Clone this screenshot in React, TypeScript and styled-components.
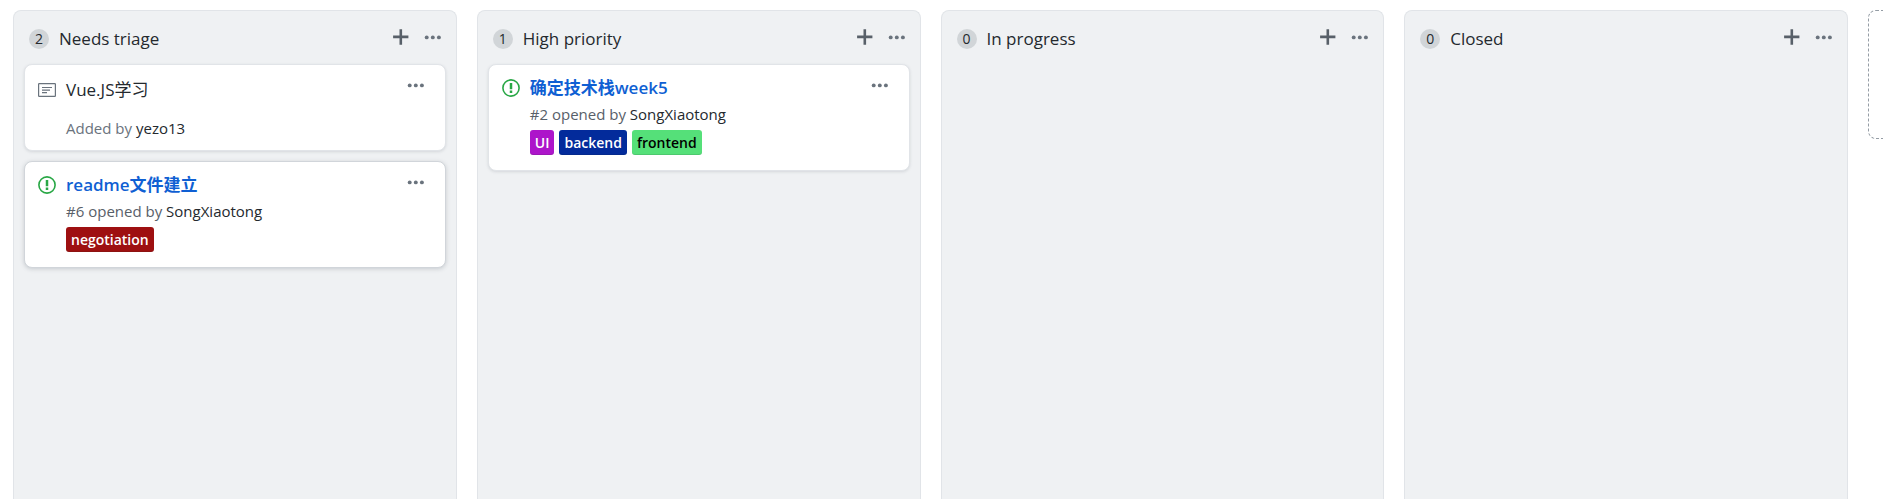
import React from "react";
import styled, { createGlobalStyle } from "styled-components";

const GlobalStyle = createGlobalStyle`
  * { box-sizing: border-box; }
  html, body, #root { height: 100%; }
  body {
    margin: 0;
    background: #fff;
    color: #24292e;
    font-family: "Segoe UI", "Open Sans", "Noto Sans CJK SC", sans-serif;
    font-size: 14px;
    line-height: 22px;
  }
  a { color: inherit; text-decoration: none; }
  a:hover { text-decoration: underline; }
`;

const Board = styled.main`
  display: grid;
  grid-template-columns: repeat(4, minmax(360px, 1fr)) 15px;
  gap: 20px;
  min-height: 100%;
  padding: 10px 0 0 13px;
`;

const ColumnBox = styled.section`
  padding: 0 10px;
  background: #eff1f3;
  border: 1px solid #e1e4e8;
  border-bottom: 0;
  border-radius: 8px 8px 0 0;
`;

const ColumnHeader = styled.header`
  display: flex;
  align-items: flex-start;
  padding: 15px 4px 12px 5px;
`;

const Count = styled.span`
  min-width: 20px;
  height: 20px;
  margin: 3px 10px 0 0;
  border-radius: 10px;
  background: #d1d5d8;
  font-size: 14px;
  line-height: 20px;
  text-align: center;
`;

const ColumnName = styled.h2`
  flex: 1;
  margin: 0;
  font-size: 17px;
  font-weight: 500;
  line-height: 26px;
`;

const IconButton = styled.button`
  display: flex;
  align-items: center;
  height: 16px;
  padding: 0;
  border: 0;
  background: none;
  color: #6a737d;
  cursor: pointer;
`;

const Actions = styled.div`
  display: flex;
  align-items: center;
  gap: 15px;
  height: 22px;
`;

const CardList = styled.div`
  display: flex;
  flex-direction: column;
  gap: 10px;
`;

const CardBox = styled.article<{ $raised?: boolean; $note?: boolean }>`
  display: flex;
  align-items: flex-start;
  padding: 12px 20px ${(p) => (p.$note ? "11px" : "15px")} 13px;
  background: #fff;
  border: 1px solid ${(p) => (p.$raised ? "#d1d5da" : "#e1e4e8")};
  border-radius: 8px;
  box-shadow: ${(p) =>
    p.$raised ? "0 1px 4px rgba(106, 115, 125, 0.3)" : "0 1px 3px rgba(106, 115, 125, 0.2)"};
`;

const CardIcon = styled.span<{ $open?: boolean }>`
  display: flex;
  align-items: center;
  height: ${(p) => (p.$open ? "22px" : "26px")};
  margin-right: 10px;
  color: ${(p) => (p.$open ? "#28a745" : "#6a737d")};
`;

const CardBody = styled.div`
  flex: 1;
  min-width: 0;
`;

const NoteText = styled.p`
  margin: 0 0 14px;
  font-size: 17px;
  line-height: 26px;
`;

const IssueTitle = styled.a`
  display: block;
  color: #0f5fd3;
  font-size: 17px;
  font-weight: 600;
  line-height: 22px;
`;

const Meta = styled.div<{ $note?: boolean }>`
  margin: ${(p) => (p.$note ? "0" : "4px 0 5px")};
  color: ${(p) => (p.$note ? "#6a737d" : "#586069")};
  font-size: 15px;
  line-height: 22px;

  a { color: #24292e; }
`;

const Labels = styled.div`
  display: flex;
  gap: 5px;
`;

const Label = styled.a<{ $bg: string; $fg: string }>`
  padding: 0 5px;
  border-radius: 3px;
  background: ${(p) => p.$bg};
  box-shadow: inset 0 -1px 0 rgba(27, 31, 35, 0.12);
  color: ${(p) => p.$fg};
  font-size: 14px;
  font-weight: 600;
  line-height: 25px;
`;

const AddColumn = styled.button`
  width: 100%;
  height: 129px;
  border: 1px dashed #959da5;
  border-right: 0;
  border-radius: 8px 0 0 8px;
  background: #fff;
`;

const PlusIcon = () => (
  <svg width="16" height="16" viewBox="0 0 16 16" aria-hidden="true">
    <path d="M6.5 0.3h2.6v6.3h6.3v2.6H9.1v6.5H6.5V9.2H0.1V6.6h6.4z" fill="#586069" />
  </svg>
);

const DotsIcon = () => (
  <svg width="18" height="6" viewBox="0 0 18 6" fill="currentColor" aria-hidden="true">
    <circle cx="2.7" cy="3.4" r="1.95" />
    <circle cx="8.8" cy="3.4" r="1.95" />
    <circle cx="14.9" cy="3.4" r="1.95" />
  </svg>
);

const NoteIcon = () => (
  <svg width="18" height="14" viewBox="0 0 18 14" fill="none" stroke="currentColor" aria-hidden="true">
    <rect x="0.6" y="0.6" width="16.8" height="12.8" rx="0.6" strokeWidth="1.2" />
    <path d="M4 4.5h10M4 7.1h8M4 9.7h5" strokeWidth="1.2" />
  </svg>
);

const OpenIcon = () => (
  <svg width="18" height="18" viewBox="0 0 18 18" fill="none" stroke="currentColor" aria-hidden="true">
    <circle cx="9" cy="9" r="8.1" strokeWidth="1.6" />
    <path d="M9 4v6.2M9 11.6V14" strokeWidth="2.5" />
  </svg>
);

type LabelData = { text: string; bg: string; fg: string };
type CardData =
  | { kind: "note"; text: string; author: string }
  | { kind: "issue"; title: string; num: number; author: string; labels: LabelData[]; raised?: boolean };

const columns: { name: string; cards: CardData[] }[] = [
  {
    name: "Needs triage",
    cards: [
      { kind: "note", text: "Vue.JS学习", author: "yezo13" },
      {
        kind: "issue",
        title: "readme文件建立",
        num: 6,
        author: "SongXiaotong",
        raised: true,
        labels: [{ text: "negotiation", bg: "#9e1011", fg: "#fff" }],
      },
    ],
  },
  {
    name: "High priority",
    cards: [
      {
        kind: "issue",
        title: "确定技术栈week5",
        num: 2,
        author: "SongXiaotong",
        labels: [
          { text: "UI", bg: "#ad15ca", fg: "#fff" },
          { text: "backend", bg: "#032b9b", fg: "#fff" },
          { text: "frontend", bg: "#55e079", fg: "#000" },
        ],
      },
    ],
  },
  { name: "In progress", cards: [] },
  { name: "Closed", cards: [] },
];

const Card = ({ card }: { card: CardData }) => (
  <CardBox $raised={card.kind === "issue" && card.raised} $note={card.kind === "note"}>
    <CardIcon $open={card.kind === "issue"}>
      {card.kind === "issue" ? <OpenIcon /> : <NoteIcon />}
    </CardIcon>
    <CardBody>
      {card.kind === "note" ? (
        <>
          <NoteText>{card.text}</NoteText>
          <Meta $note>
            Added by <a href="#author">{card.author}</a>
          </Meta>
        </>
      ) : (
        <>
          <IssueTitle href="#issue">{card.title}</IssueTitle>
          <Meta>
            #{card.num} opened by <a href="#author">{card.author}</a>
          </Meta>
          <Labels>
            {card.labels.map((l) => (
              <Label key={l.text} href="#label" $bg={l.bg} $fg={l.fg}>
                {l.text}
              </Label>
            ))}
          </Labels>
        </>
      )}
    </CardBody>
    <IconButton type="button" aria-label="Card menu">
      <DotsIcon />
    </IconButton>
  </CardBox>
);

export default function App() {
  return (
    <>
      <GlobalStyle />
      <Board>
        {columns.map((column) => (
          <ColumnBox key={column.name}>
            <ColumnHeader>
              <Count>{column.cards.length}</Count>
              <ColumnName>{column.name}</ColumnName>
              <Actions>
                <IconButton type="button" aria-label="Add a card">
                  <PlusIcon />
                </IconButton>
                <IconButton type="button" aria-label="Column menu">
                  <DotsIcon />
                </IconButton>
              </Actions>
            </ColumnHeader>
            <CardList>
              {column.cards.map((card, i) => (
                <Card key={i} card={card} />
              ))}
            </CardList>
          </ColumnBox>
        ))}
        <AddColumn type="button" aria-label="Add column" />
      </Board>
    </>
  );
}
